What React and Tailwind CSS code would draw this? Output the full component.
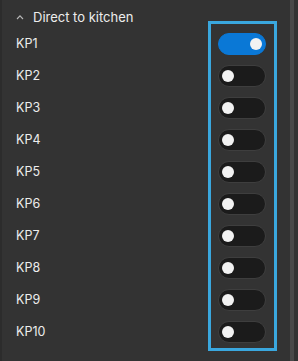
import React from "react";

const rows = ["KP1", "KP2", "KP3", "KP4", "KP5", "KP6", "KP7", "KP8", "KP9", "KP10"];

function Toggle({ on }) {
  return (
    <div
      className={
        "h-[22px] w-[48px] rounded-full flex items-center px-[3px] " +
        (on ? "bg-[#0a78d6] border border-[#0a78d6] justify-end" : "bg-[#1b1b1b] border border-[#3e3e3e] justify-start")
      }
    >
      <div className="h-[12px] w-[12px] rounded-full bg-[#f2f2f2]" />
    </div>
  );
}

export default function App() {
  return (
    <div
      className="w-[298px] h-[361px] bg-[#333333] flex overflow-hidden text-[#ededed]"
      style={{ fontFamily: "Inter, 'Noto Sans', sans-serif" }}
    >
      <div className="w-[2px] bg-[#2c2c2c]" />
      <div className="flex-1 flex flex-col">
        <div className="h-[21px] pt-[11px] pl-[14px] flex items-start gap-[9px] leading-[12px] text-[13px]">
          <svg width="8" height="12" viewBox="0 0 8 12" className="shrink-0">
            <path d="M1 8 L4 4.8 L7 8" fill="none" stroke="#b8b8b8" strokeWidth="1.1" />
          </svg>
          <span>Direct to kitchen</span>
        </div>
        <div className="flex">
          <div className="flex-1 flex flex-col pt-[7px] pl-[14px] text-[12.5px]">
            {rows.map((r) => (
              <div key={r} className="h-[32px] flex items-center">
                {r}
              </div>
            ))}
          </div>
          <div className="w-[69px] border-[3px] border-[#3aa7de] pt-[9px] pb-[5px] pl-[7px] flex flex-col gap-[10px] mr-[13px]">
            {rows.map((r, i) => (
              <Toggle key={r} on={i === 0} />
            ))}
          </div>
        </div>
      </div>
      <div className="w-[4px] bg-[#494949]" />
      <div className="w-[4px]" />
    </div>
  );
}
